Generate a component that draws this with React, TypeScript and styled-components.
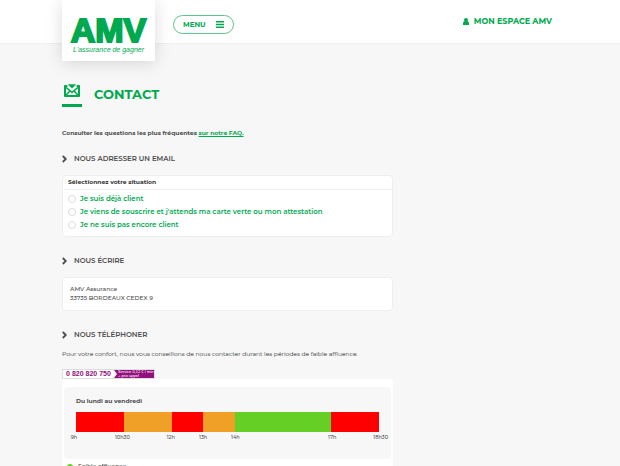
import React from 'react';
import styled, { createGlobalStyle } from 'styled-components';

const GREEN = '#00a94f';

const GlobalStyle = createGlobalStyle`
  * { box-sizing: border-box; }
  body {
    margin: 0;
    background: #f7f7f7;
    color: #4c4c4c;
    font-family: Montserrat, Inter, "Open Sans", sans-serif;
    font-size: 6px;
    line-height: 9px;
  }
  h1, h2, h3, p, address { margin: 0; padding: 0; }
`;

const Header = styled.header`
  height: 44px;
  background: #fff;
  border-bottom: 1px solid #efefef;
`;

const Container = styled.div`
  width: 80%;
  margin: 0 auto;
`;

const HeaderRow = styled(Container)`
  display: flex;
  align-items: flex-start;
`;

const Logo = styled.a`
  flex: none;
  width: 93px;
  height: 61px;
  padding-top: 14px;
  background: #fff;
  color: ${GREEN};
  text-align: center;
  text-decoration: none;
  box-shadow: 0 2px 16px rgba(0, 0, 0, 0.14);
`;

const LogoName = styled.span`
  display: block;
  font: bold 34px/32px "Liberation Sans", sans-serif;
  -webkit-text-stroke: 2px ${GREEN};
`;

const LogoTagline = styled.span`
  display: block;
  font: italic 7px/8px "Liberation Sans", sans-serif;
`;

const MenuButton = styled.button`
  display: flex;
  align-items: center;
  justify-content: space-between;
  width: 61px;
  height: 19px;
  margin: 15px 0 0 18px;
  padding: 0 9px;
  border: 1px solid #5cc78d;
  border-radius: 10px;
  background: #fff;
  color: ${GREEN};
  font: 700 7px/9px Montserrat, Inter, sans-serif;
`;

const AccountLink = styled.a`
  display: flex;
  align-items: center;
  gap: 5px;
  margin: 17px 6px 0 auto;
  color: ${GREEN};
  font-size: 8px;
  font-weight: 700;
  text-decoration: none;
`;

const Columns = styled(Container)`
  display: grid;
  grid-template-columns: 2fr 1fr;
`;

const Main = styled.main`
  padding-top: 39px;
`;

const TitleRow = styled.div`
  display: flex;
  align-items: flex-start;
  gap: 12px;
`;

const TitleIcon = styled.span`
  display: flex;
  justify-content: center;
  width: 20px;
  height: 24px;
  border-bottom: 3px solid ${GREEN};
`;

const Title = styled.h1`
  color: ${GREEN};
  font-size: 13px;
  font-weight: 700;
  line-height: 22px;
`;

const Intro = styled.p`
  margin-top: 22px;
  font-weight: 700;
`;

const FaqLink = styled.a`
  color: ${GREEN};
`;

const SectionTitle = styled.h2`
  display: flex;
  align-items: center;
  gap: 7px;
  margin-top: 16px;
  font-size: 7px;
  font-weight: 600;
  line-height: 10px;
`;

const Card = styled.div`
  margin: 11px 0 19px;
  border: 1px solid #eee;
  border-radius: 4px;
  background: #fff;
`;

const Legend = styled.div`
  padding: 2px 5px;
  border-bottom: 1px solid #f0f0f0;
  color: #333;
  font-weight: 700;
`;

const Options = styled.div`
  padding: 2px 5px 5px;
`;

const Option = styled.label`
  display: flex;
  align-items: center;
  gap: 4px;
  height: 13px;
  color: ${GREEN};
  font-size: 7px;
  font-weight: 600;
`;

const Radio = styled.input`
  appearance: none;
  width: 8px;
  height: 8px;
  margin: 0;
  border: 1px solid #ddd;
  border-radius: 50%;
  background: #fff;
  &:checked { background: ${GREEN}; }
`;

const Address = styled.address`
  padding: 7px;
  font-style: normal;
  font-weight: 500;
`;

const Advice = styled.p`
  margin-top: 10px;
  color: #333;
  font-weight: 400;
`;

const Phone = styled.div`
  display: flex;
  width: 93px;
  height: 10px;
  margin-top: 10px;
  border: 1px solid #ddd;
  background: #fff;
  font-family: "Liberation Sans", sans-serif;
`;

const PhoneNumber = styled.strong`
  width: 51px;
  color: #92117e;
  font-size: 7px;
  line-height: 8px;
  text-align: center;
  white-space: nowrap;
`;

const PhoneRate = styled.span`
  flex: 1;
  padding-left: 4px;
  background: #92117e;
  clip-path: polygon(0 0, 100% 0, 100% 100%, 0 100%, 3px 50%);
  color: #fff;
  font-size: 4px;
  line-height: 4px;
  white-space: nowrap;
`;

const Schedule = styled.div`
  padding: 8px 2px 12px;
  background: #fff;
`;

const Day = styled.section`
  padding: 10px 12px 17px;
  border-radius: 4px;
  background: #f7f7f7;
`;

const DayTitle = styled.h3`
  font-size: 6px;
  font-weight: 700;
`;

const Timeline = styled.div`
  display: grid;
  grid-template-columns: 3fr 3fr 2fr 2fr 6fr 3fr;
  height: 20px;
  margin-top: 6px;
`;

const Slot = styled.span<{ $level: keyof typeof LEVELS }>`
  background: ${({ $level }) => LEVELS[$level]};
`;

const Hours = styled.div`
  display: grid;
  grid-template-columns: 3fr 3fr 2fr 2fr 6fr 3fr 0;
  margin: 1px -2px 0;
  font-size: 5px;
  font-weight: 500;
`;

const Hour = styled.span`
  display: flex;
  justify-content: center;
  width: 0;
  white-space: nowrap;
`;

const Key = styled.p`
  display: flex;
  align-items: center;
  gap: 5px;
  margin: 3px 0 0 3px;
  font-weight: 500;
`;

const Dot = styled.span`
  width: 6px;
  height: 6px;
  border-radius: 50%;
  background: #66cf26;
`;

const LEVELS = { high: '#ff0000', medium: '#f0a027', low: '#66cf26' };
const SLOTS: (keyof typeof LEVELS)[] = ['high', 'medium', 'high', 'medium', 'low', 'high'];
const HOURS = ['9h', '10h30', '12h', '13h', '14h', '17h', '18h30'];
const SITUATIONS = [
  'Je suis déjà client',
  "Je viens de souscrire et j'attends ma carte verte ou mon attestation",
  'Je ne suis pas encore client',
];

const Chevron = () => (
  <svg width="5" height="8" viewBox="0 0 5 8" fill="none" stroke="#4c4c4c" strokeWidth="1.8" aria-hidden="true">
    <path d="M0.8 1 L3.8 4 L0.8 7" />
  </svg>
);

export default function App() {
  return (
    <>
      <GlobalStyle />
      <Header>
        <HeaderRow>
          <Logo href="#">
            <LogoName>AMV</LogoName>
            <LogoTagline>L'assurance de gagner</LogoTagline>
          </Logo>
          <MenuButton type="button">
            MENU
            <svg width="8" height="7" viewBox="0 0 8 7" stroke="currentColor" strokeWidth="1.5" aria-hidden="true">
              <path d="M0 0.8H8M0 3.5H8M0 6.2H8" />
            </svg>
          </MenuButton>
          <AccountLink href="#">
            <svg width="6" height="7" viewBox="0 0 6 7" fill="currentColor" aria-hidden="true">
              <circle cx="3" cy="2" r="2" />
              <path d="M0 7V5.2Q0 3.4 1.5 3.2H4.5Q6 3.4 6 5.2V7Z" />
            </svg>
            MON ESPACE AMV
          </AccountLink>
        </HeaderRow>
      </Header>
      <Columns>
        <Main>
          <TitleRow>
            <TitleIcon>
              <svg width="16" height="15" viewBox="0 0 16 15" fill="none" stroke={GREEN} strokeWidth="2" strokeLinejoin="round" aria-hidden="true">
                <path d="M3.4 3H1V13H15V3H12.6" />
                <path d="M1.4 4L8 9.4L14.6 4M1.4 13L5.6 8.2M14.6 13L10.4 8.2" strokeWidth="1.5" />
                <path d="M3.8 1.2H12.2L8 5.4Z" fill={GREEN} stroke="none" />
              </svg>
            </TitleIcon>
            <Title>CONTACT</Title>
          </TitleRow>
          <Intro>
            Consulter les questions les plus fréquentes <FaqLink href="#">sur notre FAQ.</FaqLink>
          </Intro>

          <SectionTitle><Chevron />NOUS ADRESSER UN EMAIL</SectionTitle>
          <Card role="radiogroup" aria-labelledby="situation">
            <Legend id="situation">Sélectionnez votre situation</Legend>
            <Options>
              {SITUATIONS.map((text) => (
                <Option key={text}>
                  <Radio type="radio" name="situation" />
                  {text}
                </Option>
              ))}
            </Options>
          </Card>

          <SectionTitle><Chevron />NOUS ÉCRIRE</SectionTitle>
          <Card>
            <Address>
              AMV Assurance<br />
              33735 BORDEAUX CEDEX 9
            </Address>
          </Card>

          <SectionTitle><Chevron />NOUS TÉLÉPHONER</SectionTitle>
          <Advice>
            Pour votre confort, nous vous conseillons de nous contacter durant les périodes de faible affluence.
          </Advice>
          <Phone>
            <PhoneNumber>0 820 820 750</PhoneNumber>
            <PhoneRate>Service 0,12 € / min<br />+ prix appel</PhoneRate>
          </Phone>
          <Schedule>
            <Day>
              <DayTitle>Du lundi au vendredi</DayTitle>
              <Timeline>
                {SLOTS.map((level, i) => <Slot key={i} $level={level} />)}
              </Timeline>
              <Hours>
                {HOURS.map((hour) => <Hour key={hour}>{hour}</Hour>)}
              </Hours>
            </Day>
            <Key><Dot />Faible affluence</Key>
          </Schedule>
        </Main>
      </Columns>
    </>
  );
}
